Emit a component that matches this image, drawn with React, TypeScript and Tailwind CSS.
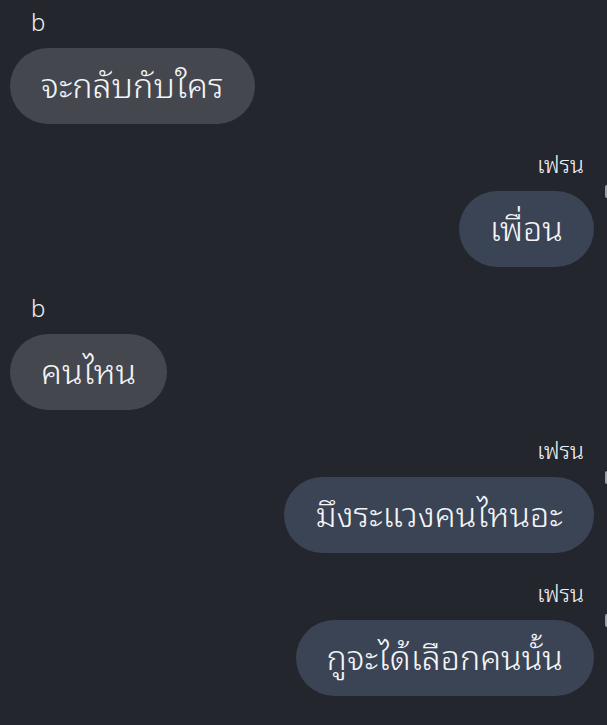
import React from "react";

type Msg = { name: string; text: string; me: boolean };

const msgs: Msg[] = [
  { name: "b", text: "จะกลับกับใคร", me: false },
  { name: "เฟรน", text: "เพื่อน", me: true },
  { name: "b", text: "คนไหน", me: false },
  { name: "เฟรน", text: "มึงระแวงคนไหนอะ", me: true },
  { name: "เฟรน", text: "กูจะได้เลือกคนนั้น", me: true },
];

export default function App() {
  return (
    <div className="w-[607px] h-[725px] overflow-hidden bg-[#24262d] text-white pt-[8px] flex flex-col gap-[27px] font-['Noto_Sans_Thai_Looped','Liberation_Sans',sans-serif] font-light">
      {msgs.map((m, i) =>
        m.me ? (
          <div key={i} className="flex flex-row items-start">
            <div className="flex-1 flex flex-col items-end">
              <div className="h-[28px] leading-[24px] text-[23px] pr-[10px] text-[#f2f2f4]">{m.name}</div>
              <div className="mt-[12px] h-[76px] rounded-full bg-[#3b4455] px-[31px] pb-[7px] flex items-center text-[34px] text-[#f4f5f7]">
                {m.text}
              </div>
            </div>
            <div className="w-[13px] flex flex-row justify-end pt-[34px]">
              <div className="w-[2px] h-[13px] rounded-l-full bg-[#9a9ca2]" />
            </div>
          </div>
        ) : (
          <div key={i} className="flex flex-col items-start pl-[10px]">
            <div className="h-[28px] leading-[28px] text-[24px] pl-[21px] text-[#f2f2f4] font-['Noto_Sans','Liberation_Sans',sans-serif] font-light">{m.name}</div>
            <div className="mt-[12px] h-[76px] rounded-full bg-[#45474f] px-[31px] pb-[7px] flex items-center text-[34px] text-[#f4f5f7]">
              {m.text}
            </div>
          </div>
        )
      )}
    </div>
  );
}
